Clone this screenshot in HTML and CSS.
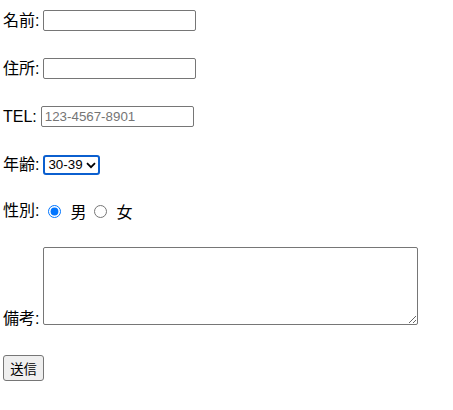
FILE: index.html
```html
<!DOCTYPE html>
<html lang="ja">
<head>
<meta charset="utf-8">
<link rel="stylesheet" href="styles.css">
</head>
<body>
<form class="form">
  <div class="row"><label class="label" for="name">名前:</label><input id="name" type="text" class="field"></div>
  <div class="row"><label class="label" for="addr">住所:</label><input id="addr" type="text" class="field"></div>
  <div class="row"><label class="label" for="tel">TEL:</label><input id="tel" type="tel" class="field" placeholder="123-4567-8901"></div>
  <div class="row"><label class="label" for="age">年齢:</label><span class="select-wrap"><select id="age" class="select"><option>30-39</option></select><svg class="chev" width="10" height="7" viewBox="0 0 10 7"><path d="M1 1.2 L5 5.2 L9 1.2" fill="none" stroke="#000" stroke-width="1.8"/></svg></span></div>
  <div class="row row-radio"><span class="label">性別:</span><label class="radio"><input type="radio" name="g" checked class="dot"><span>男</span></label><label class="radio"><input type="radio" name="g" class="dot"><span>女</span></label></div>
  <div class="row row-memo"><label class="label memo-label" for="memo">備考:</label><textarea id="memo" class="memo"></textarea></div>
  <div class="row row-btn"><button type="button" class="submit">送信</button></div>
</form>
</body>
</html>
```
FILE: styles.css
```css
body {
  margin: 0;
  padding: 10px 3px 0;
  font-family: "Liberation Sans", "Noto Sans CJK JP", sans-serif;
  font-size: 16px;
  color: #000;
  background: #fff;
}
.form {
  display: flex;
  flex-direction: column;
  align-items: flex-start;
}
.row {
  display: flex;
  align-items: center;
  height: 21px;
  margin-bottom: 27px;
  gap: 4px;
}
.label {
  line-height: 18px;
}
.field {
  box-sizing: border-box;
  width: 153px;
  height: 21px;
  margin: 0;
  padding: 1px 3px;
  border: 1px solid #767676;
  border-radius: 2px;
  font-family: "Liberation Sans", sans-serif;
  font-size: 13.33px;
}
.field::placeholder {
  color: #757575;
}
.select-wrap {
  position: relative;
  display: flex;
}
.select {
  appearance: none;
  -webkit-appearance: none;
  box-sizing: border-box;
  width: 57px;
  height: 20px;
  margin: 0;
  padding: 0 0 0 3px;
  font-family: "Liberation Sans", sans-serif;
  font-size: 13.33px;
  border: 2px solid #0b5fcf;
  border-radius: 3px;
  background: #fff;
  color: #000;
}
.chev {
  position: absolute;
  right: 4px;
  top: 7px;
  pointer-events: none;
}
.row-radio {
  height: 18px;
  gap: 0;
}
.row-radio .label {
  margin-right: 4px;
}
.radio {
  display: flex;
  align-items: center;
}
.dot {
  width: 13px;
  height: 13px;
  margin: 0 9px 0 5px;
}
.radio + .radio {
  margin-left: 3px;
}
.row-memo {
  height: 78px;
  align-items: flex-end;
  margin-bottom: 30px;
}
.memo-label {
  margin-bottom: -3px;
}
.memo {
  box-sizing: border-box;
  width: 375px;
  height: 78px;
  margin: 0;
  border: 1px solid #767676;
  border-radius: 2px;
}
.row-btn {
  height: 26px;
}
.submit {
  box-sizing: border-box;
  width: 41px;
  height: 26px;
  margin: 0;
  padding: 0;
  border: 1px solid #767676;
  border-radius: 3px;
  background: #efefef;
  font-family: "Liberation Sans", "Noto Sans CJK JP", sans-serif;
  font-size: 13.33px;
  color: #000;
}
```
